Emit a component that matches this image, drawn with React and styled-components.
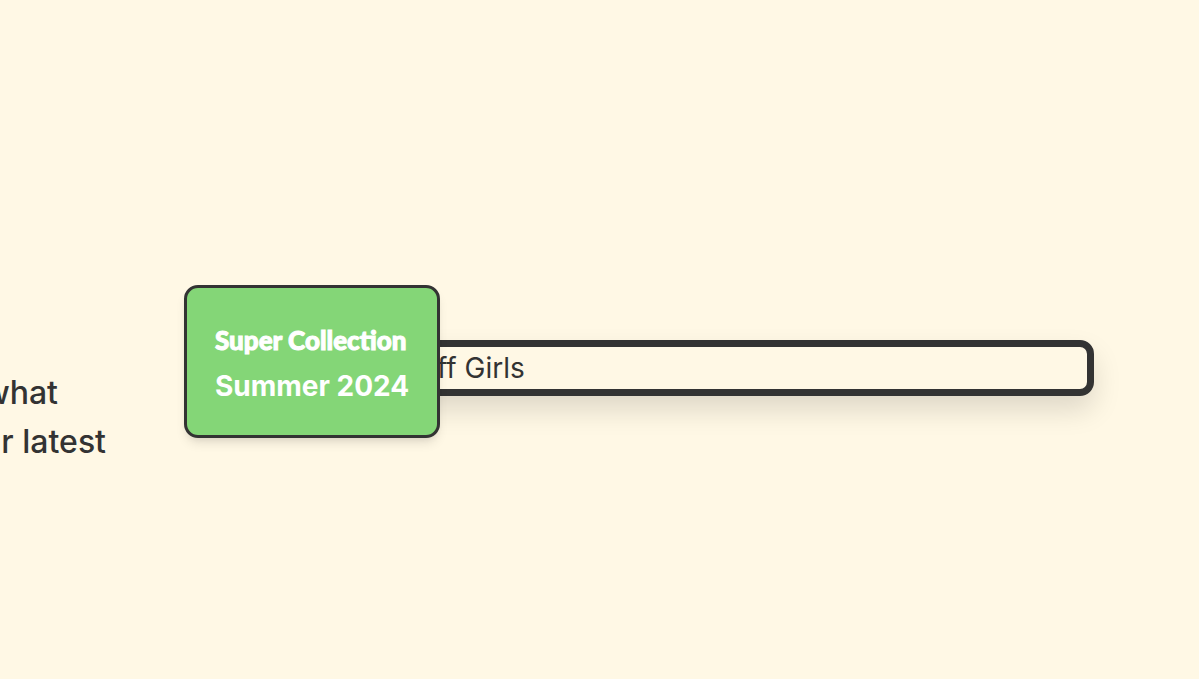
import React from "react";
import styled, { createGlobalStyle } from "styled-components";

const GlobalStyle = createGlobalStyle`
  *, *::before, *::after { box-sizing: border-box; }
  body {
    margin: 0;
    background: #fff8e5;
    color: #333333;
    font-family: Inter, "Liberation Sans", sans-serif;
    font-size: 28px;
    line-height: 42px;
  }
`;

const Hero = styled.main`
  display: grid;
  grid-template-columns: 212px 1fr;
  align-items: start;
  min-height: 100vh;
  padding: 340px 105px 0 0;
  overflow: hidden;
`;

const Intro = styled.p`
  margin: 0;
  padding-top: 28px;
  font-size: 32px;
  font-weight: 500;
  line-height: 49px;
`;

const Line = styled.span`
  display: flex;
  justify-content: flex-end;
  width: ${(p) => p.$width}px;
  white-space: nowrap;
`;

const Showcase = styled.div`
  position: relative;
`;

const Frame = styled.div`
  padding-left: 218px;
  border: 7px solid #333333;
  border-radius: 14px;
  box-shadow: 0 14px 28px rgba(0, 0, 0, 0.13);
  white-space: nowrap;
`;

const Badge = styled.aside`
  position: absolute;
  top: -55px;
  left: -28px;
  width: 256px;
  padding: 28px;
  border: 3px solid #333333;
  border-radius: 14px;
  background: #84d677;
  color: #ffffff;
  box-shadow: 0 7px 11px -2px rgba(0, 0, 0, 0.1), 0 4px 7px -4px rgba(0, 0, 0, 0.1);
  font-weight: 700;
  white-space: nowrap;
`;

const BadgeTitle = styled.h2`
  margin: 0;
  font-family: Lato, "Liberation Sans", sans-serif;
  font-size: 26px;
  font-weight: 900;
  line-height: 49px;
  -webkit-text-stroke: 1px #ffffff;
`;

const BadgeText = styled.p`
  margin: 0;
`;

export default function App() {
  return (
    <>
      <GlobalStyle />
      <Hero>
        <Intro>
          <Line $width={58}>what</Line>
          <Line $width={106}>r latest</Line>
        </Intro>
        <Showcase>
          <Frame>ff Girls</Frame>
          <Badge>
            <BadgeTitle>Super Collection</BadgeTitle>
            <BadgeText>Summer 2024</BadgeText>
          </Badge>
        </Showcase>
      </Hero>
    </>
  );
}
